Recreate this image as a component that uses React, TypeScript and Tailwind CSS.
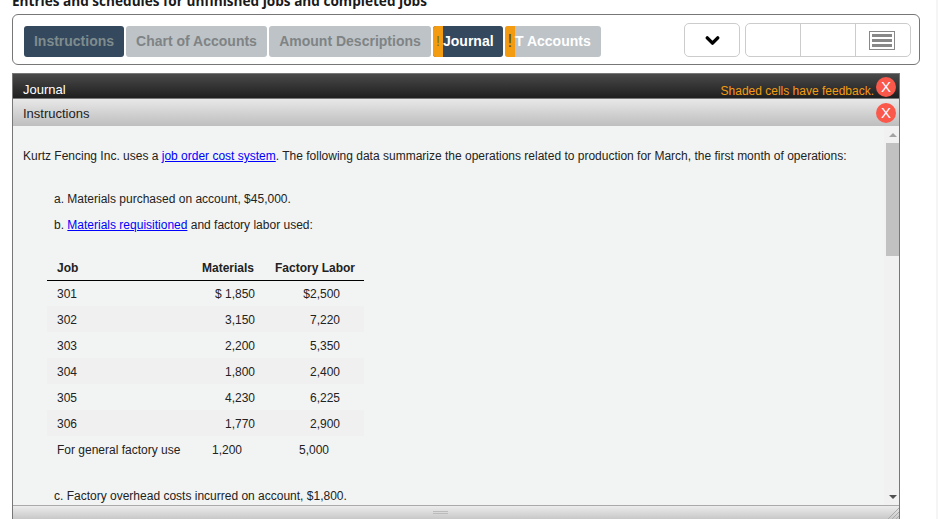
import { ChevronDown } from 'lucide-react';

const rows = [
  { job: '301', materials: '$ 1,850', labor: '$2,500' },
  { job: '302', materials: '3,150', labor: '7,220' },
  { job: '303', materials: '2,200', labor: '5,350' },
  { job: '304', materials: '1,800', labor: '2,400' },
  { job: '305', materials: '4,230', labor: '6,225' },
  { job: '306', materials: '1,770', labor: '2,900' },
];

function CloseButton() {
  return (
    <div className="w-5 h-5 rounded-full bg-[#f9584a] text-white text-[15px] leading-5 text-center">X</div>
  );
}

export default function App() {
  return (
    <div className="w-[938px] h-[519px] overflow-hidden relative bg-white font-['Liberation_Sans',Arial,sans-serif] text-[12px] text-[#222]">
      <div className="absolute right-0 top-0 bottom-0 w-[2px] bg-[#f5f5f5]"></div>

      {/* Cut-off heading */}
      <div className="h-[14px] pl-[12px] flex items-start">
        <div className="-mt-[9px] font-['Open_Sans',sans-serif] font-bold text-[13.6px] leading-[20px] text-[#1a1a1a] whitespace-nowrap h-[20px]">
          Entries and schedules for unfinished jobs and completed jobs
        </div>
      </div>

      {/* Toolbar */}
      <div className="ml-[12px] w-[908px] h-[51px] border border-[#777] rounded-[6px] flex items-start pl-[11px] pr-[8px] pt-[8px] justify-between">
        <div className="flex gap-[2px] mt-[3px]">
          <div className="h-[31px] w-[100px] rounded-[3px] bg-[#34495e] text-[#7f8c8d] text-[14px] font-bold leading-[31px] text-center">Instructions</div>
          <div className="h-[31px] w-[141px] rounded-[3px] bg-[#bdc3c7] text-[#7f8385] text-[14px] font-bold leading-[31px] text-center">Chart of Accounts</div>
          <div className="h-[31px] w-[162px] rounded-[3px] bg-[#bdc3c7] text-[#7f8385] text-[14px] font-bold leading-[31px] text-center">Amount Descriptions</div>
          <div className="h-[31px] w-[70px] flex rounded-[3px] overflow-hidden bg-[#34495e]">
            <div className="w-[10px] bg-[#f39c12] text-[#7a6a3a] text-[14px] leading-[31px] text-center">!</div>
            <div className="text-white text-[14px] font-bold leading-[31px]">Journal</div>
          </div>
          <div className="h-[31px] w-[96px] flex rounded-[3px] overflow-hidden bg-[#bdc3c7]">
            <div className="w-[10px] bg-[#f39c12] text-[#5f5130] text-[19px] leading-[30px] text-center">!</div>
            <div className="text-white text-[14px] font-bold leading-[31px]">T Accounts</div>
          </div>
        </div>
        <div className="flex gap-[5px]">
          <div className="w-[56px] h-[34px] border border-[#ccc] rounded-[5px] flex items-center justify-center text-black">
            <ChevronDown size={21} strokeWidth={4} className="mt-[1px]" />
          </div>
          <div className="w-[166px] h-[34px] border border-[#ccc] rounded-[5px] flex">
            <div className="w-[55px] border-r border-[#ccc]"></div>
            <div className="w-[55px] border-r border-[#ccc]"></div>
            <div className="flex-1 flex items-center justify-center pr-[3px]">
              <svg width="26" height="19" viewBox="0 0 26 19">
                <rect x="0.5" y="0.5" width="25" height="18" fill="#fff" stroke="#888" />
                <rect x="3" y="3" width="20" height="3" fill="#888" />
                <rect x="3" y="8" width="20" height="3" fill="#888" />
                <rect x="3" y="13" width="20" height="3" fill="#888" />
              </svg>
            </div>
          </div>
        </div>
      </div>

      {/* Panel */}
      <div className="ml-[12px] mt-[8px] w-[888px] h-[446px] border-x border-t border-[#777] flex flex-col">
        <div className="h-[25px] shrink-0 bg-gradient-to-b from-[#4a4a4a] to-[#1f1f1f] border-b border-[#777] flex items-start justify-between pl-[10px] pr-[3px]">
          <div className="text-white text-[13px] leading-[15px] mt-[8px]">Journal</div>
          <div className="flex items-start">
            <div className="text-[#f39c12] text-[12px] leading-[14px] mt-[10px] mr-[2px]">Shaded cells have feedback.</div>
            <div className="mt-[3px]"><CloseButton /></div>
          </div>
        </div>
        <div className="h-[27px] shrink-0 bg-gradient-to-b from-[#e8e8e8] to-[#bebebe] flex items-center justify-between pl-[10px] pr-[3px]">
          <div className="text-[#222] text-[13px] leading-[15px] mt-[2px]">Instructions</div>
          <CloseButton />
        </div>

        <div className="h-[380px] shrink-0 flex bg-[#f2f4f3] border-b border-[#aaa]">
          <div className="flex-1 overflow-hidden pl-[10px]">
            <p className="mt-[23px] leading-[14px] whitespace-nowrap">
              Kurtz Fencing Inc. uses a <a className="text-[#00f] underline">job order cost system</a>. The following data summarize the operations related to production for March, the first month of operations:
            </p>
            <p className="mt-[29px] ml-[31px] leading-[14px]">a. Materials purchased on account, $45,000.</p>
            <p className="mt-[12px] ml-[31px] leading-[14px]">
              b. <a className="text-[#00f] underline">Materials requisitioned</a> and factory labor used:
            </p>

            <table className="mt-[22px] ml-[24px] w-[317px] table-fixed border-collapse">
              <colgroup>
                <col className="w-[143px]" />
                <col className="w-[75px]" />
                <col className="w-[99px]" />
              </colgroup>
              <thead>
                <tr className="h-[26px] border-b border-black font-bold">
                  <th className="pl-[10px] pt-[2px] text-left font-bold">Job</th>
                  <th className="pr-[11px] pt-[2px] text-right font-bold">Materials</th>
                  <th className="pr-[9px] pt-[2px] text-right font-bold">Factory Labor</th>
                </tr>
              </thead>
              <tbody>
                {rows.map((row, idx) => (
                  <tr key={row.job} className={`h-[26px] ${idx % 2 === 1 ? 'bg-[#f0f0f0]' : ''}`}>
                    <td className="pl-[10px] pt-[1px]">{row.job}</td>
                    <td className="pr-[10px] pt-[1px] text-right">{row.materials}</td>
                    <td className="pr-[24px] pt-[1px] text-right">{row.labor}</td>
                  </tr>
                ))}
                <tr className="h-[26px]">
                  <td className="pl-[10px] pt-[1px] whitespace-nowrap">For general factory use</td>
                  <td className="pr-[23px] pt-[1px] text-right">1,200</td>
                  <td className="pr-[35px] pt-[1px] text-right">5,000</td>
                </tr>
              </tbody>
            </table>

            <p className="mt-[27px] ml-[31px] leading-[14px]">c. Factory overhead costs incurred on account, $1,800.</p>
          </div>

          {/* Scrollbar */}
          <div className="w-[15px] shrink-0 bg-[#f1f1f1] flex flex-col items-end">
            <div className="w-[13px] h-[17px] flex items-center justify-center">
              <div className="w-0 h-0 border-x-[4px] border-x-transparent border-b-[4px] border-b-[#a3a3a3]"></div>
            </div>
            <div className="w-[13px] h-[113px] bg-[#c1c1c1]"></div>
            <div className="flex-1"></div>
            <div className="w-[13px] h-[17px] flex items-center justify-center">
              <div className="w-0 h-0 border-x-[4px] border-x-transparent border-t-[4px] border-t-[#505050]"></div>
            </div>
          </div>
        </div>

        {/* Resize bar */}
        <div className="flex-1 bg-gradient-to-b from-[#ececec] to-[#c8c8c8] flex justify-between">
          <div className="ml-[420px] mt-[5px] w-[15px] h-[3px] border-y border-[#bbb]"></div>
          <svg width="12" height="12" viewBox="0 0 12 12" className="mt-[1px]">
            <path d="M1 12 L12 1 M5 12 L12 5 M9 12 L12 9" stroke="#aaa" strokeWidth="1" />
          </svg>
        </div>
      </div>
    </div>
  );
}
